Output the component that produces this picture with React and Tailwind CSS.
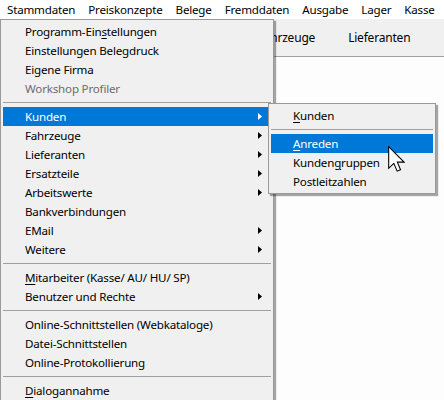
import React from 'react'

const font = { fontFamily: '"Noto Sans", "Open Sans", sans-serif' }

const menuBar = ['Stammdaten', 'Preiskonzepte', 'Belege', 'Fremddaten', 'Ausgabe', 'Lager', 'Kasse']

// main dropdown rows; sep = separator line
const mainItems = [
  { label: <>Programm-Ein<u>s</u>tellungen</> },
  { label: 'Einstellungen Belegdruck' },
  { label: 'Eigene Firma' },
  { label: 'Workshop Profiler', disabled: true },
  { sep: true },
  { label: 'Kunden', sub: true, active: true },
  { label: 'Fahrzeuge', sub: true },
  { label: 'Lieferanten', sub: true },
  { label: 'Ersatzteile', sub: true },
  { label: 'Arbeitswerte', sub: true },
  { label: 'Bankverbindungen' },
  { label: 'EMail', sub: true },
  { label: 'Weitere', sub: true },
  { sep: true },
  { label: <><u>M</u>itarbeiter (Kasse/ AU/ HU/ SP)</> },
  { label: 'Benutzer und Rechte', sub: true },
  { sep: true },
  { label: 'Online-Schnittstellen (Webkataloge)' },
  { label: 'Datei-Schnittstellen' },
  { label: 'Online-Protokollierung' },
  { sep: true },
  { label: <><u>D</u>ialogannahme</> },
]

const subItems = [
  { label: <><u>K</u>unden</> },
  { sep: true },
  { label: <><u>A</u>nreden</>, active: true },
  { label: <>Kunden<u>g</u>ruppen</> },
  { label: 'Postleitzahlen' },
]

function Arrow({ white }) {
  return (
    <svg width="4" height="7" viewBox="0 0 4 7" className="absolute right-[9px] top-[6px]">
      <polygon points="0,0 4,3.5 0,7" fill={white ? '#ffffff' : '#000000'} />
    </svg>
  )
}

function MenuRow({ item }) {
  if (item.sep) {
    return (
      <div className="h-[9px] flex items-center px-[2px]">
        <div className="h-px w-full bg-[#a0a0a0]" />
      </div>
    )
  }
  return (
    <div className="px-[2px]">
      <div
        className={
          'relative h-[19px] pl-[22px] leading-[19px] whitespace-nowrap ' +
          (item.active ? 'bg-[#0078d7] text-white' : item.disabled ? 'text-[#6d6d6d]' : 'text-black')
        }
      >
        <span className="[&_u]:underline-offset-[2px]">{item.label}</span>
        {item.sub && <Arrow white={item.active} />}
      </div>
    </div>
  )
}

function Cursor() {
  return (
    <svg width="17" height="26" viewBox="0 0 12.6 19.2" className="absolute left-[388px] top-[146px]">
      <polygon
        points="0.5,0.5 0.5,16.5 4.3,12.8 6.8,18.6 9.3,17.6 6.9,11.9 11.9,11.9"
        fill="#ffffff"
        stroke="#000000"
        strokeWidth="0.8"
        strokeLinejoin="miter"
      />
    </svg>
  )
}

export default function App() {
  return (
    <div
      className="relative w-[444px] h-[400px] overflow-hidden bg-[#fcfdfc] text-[11.6px] tracking-[-0.2px]"
      style={font}
    >
      {/* menu bar */}
      <div className="flex h-[19px] bg-white items-center pl-[0.5px]">
        {menuBar.map((m) => (
          <div key={m} className="px-[6.5px] leading-[19px] text-black whitespace-nowrap">
            {m}
          </div>
        ))}
      </div>

      {/* toolbar behind the menus */}
      <div className="flex h-[38px] items-center pl-[182px] gap-[33px] bg-[#f0f0f0] border-b border-[#a0a0a0] text-[12px] text-black">
        <span>Kunden</span>
        <span>Fahrzeuge</span>
        <span>Lieferanten</span>
      </div>

      {/* main dropdown */}
      <div className="absolute left-0 top-[19px] w-[274px] bg-[#f0f0f0] border border-[#999999] py-[2px] shadow-[2px_2px_1px_rgba(0,0,0,0.35)]">
        {mainItems.map((it, i) => (
          <MenuRow key={i} item={it} />
        ))}
      </div>

      {/* submenu */}
      <div className="absolute left-[268px] top-[103px] w-[168px] bg-[#f0f0f0] border border-[#999999] py-[2px] shadow-[2px_2px_1px_rgba(0,0,0,0.35)]">
        {subItems.map((it, i) => (
          <MenuRow key={i} item={it} />
        ))}
      </div>

      <Cursor />
    </div>
  )
}
